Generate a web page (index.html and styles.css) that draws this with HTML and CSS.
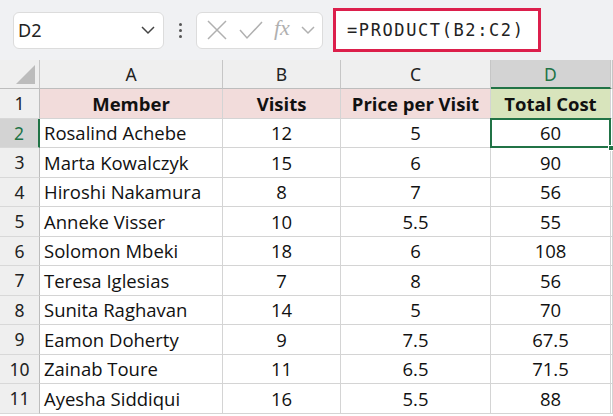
FILE: index.html
```html
<!DOCTYPE html>
<html lang="en">
<head>
  <meta charset="UTF-8">
  <meta name="viewport" content="width=device-width, initial-scale=1.0">
  <title>Total Cost</title>
  <link rel="stylesheet" href="styles.css">
</head>
<body>
  <div class="formula-bar">
    <div class="name-box">
      <span>D2</span>
      <svg class="chevron" width="16" height="10" viewBox="0 0 16 10"><path d="M2 2 L8 8 L14 2" fill="none" stroke="#444" stroke-width="1.5"/></svg>
    </div>
    <div class="grip"><i></i><i></i><i></i></div>
    <div class="fx-box">
      <svg width="22" height="22" viewBox="0 0 22 22"><path d="M2 2 L20 20 M20 2 L2 20" stroke="#b0b0b0" stroke-width="1.5" fill="none"/></svg>
      <svg width="24" height="22" viewBox="0 0 24 22"><path d="M1 11 L8 19 L23 3" stroke="#b0b0b0" stroke-width="1.5" fill="none"/></svg>
      <span class="fx">fx</span>
      <svg width="14" height="10" viewBox="0 0 14 10"><path d="M1 2 L7 8 L13 2" fill="none" stroke="#b0b0b0" stroke-width="1.5"/></svg>
    </div>
    <div class="formula">=PRODUCT(B2:C2)</div>
  </div>

  <div class="sheet">
    <div class="col-head corner"><span class="tri"></span></div>
    <div class="col-head">A</div>
    <div class="col-head">B</div>
    <div class="col-head">C</div>
    <div class="col-head active">D</div>
    <div class="col-head"></div>

    <div class="row-head">1</div>
    <div class="cell head pink">Member</div>
    <div class="cell head pink">Visits</div>
    <div class="cell head pink">Price per Visit</div>
    <div class="cell head green">Total Cost</div>
    <div class="cell"></div>

    <div class="row-head active">2</div>
    <div class="cell name">Rosalind Achebe</div>
    <div class="cell">12</div>
    <div class="cell">5</div>
    <div class="cell selected">60<span class="handle"></span></div>
    <div class="cell"></div>

    <div class="row-head">3</div>
    <div class="cell name">Marta Kowalczyk</div>
    <div class="cell">15</div>
    <div class="cell">6</div>
    <div class="cell">90</div>
    <div class="cell"></div>

    <div class="row-head">4</div>
    <div class="cell name">Hiroshi Nakamura</div>
    <div class="cell">8</div>
    <div class="cell">7</div>
    <div class="cell">56</div>
    <div class="cell"></div>

    <div class="row-head">5</div>
    <div class="cell name">Anneke Visser</div>
    <div class="cell">10</div>
    <div class="cell">5.5</div>
    <div class="cell">55</div>
    <div class="cell"></div>

    <div class="row-head">6</div>
    <div class="cell name">Solomon Mbeki</div>
    <div class="cell">18</div>
    <div class="cell">6</div>
    <div class="cell">108</div>
    <div class="cell"></div>

    <div class="row-head">7</div>
    <div class="cell name">Teresa Iglesias</div>
    <div class="cell">7</div>
    <div class="cell">8</div>
    <div class="cell">56</div>
    <div class="cell"></div>

    <div class="row-head">8</div>
    <div class="cell name">Sunita Raghavan</div>
    <div class="cell">14</div>
    <div class="cell">5</div>
    <div class="cell">70</div>
    <div class="cell"></div>

    <div class="row-head">9</div>
    <div class="cell name">Eamon Doherty</div>
    <div class="cell">9</div>
    <div class="cell">7.5</div>
    <div class="cell">67.5</div>
    <div class="cell"></div>

    <div class="row-head">10</div>
    <div class="cell name">Zainab Toure</div>
    <div class="cell">11</div>
    <div class="cell">6.5</div>
    <div class="cell">71.5</div>
    <div class="cell"></div>

    <div class="row-head">11</div>
    <div class="cell name">Ayesha Siddiqui</div>
    <div class="cell">16</div>
    <div class="cell">5.5</div>
    <div class="cell">88</div>
    <div class="cell"></div>
  </div>
</body>
</html>
```

FILE: styles.css
```css
* {
  margin: 0;
  padding: 0;
  box-sizing: border-box;
}

body {
  font-family: "Open Sans", "Noto Sans", sans-serif;
  background: #fff;
  width: 613px;
  height: 416px;
  overflow: hidden;
}

/* Barra de fórmulas */
.formula-bar {
  height: 60px;
  background: #f0f1f3;
  display: flex;
  align-items: center;
  padding: 0 0 0 13px;
}

.name-box {
  width: 151px;
  height: 37px;
  background: #fff;
  border: 1px solid #dcdcdc;
  border-radius: 6px;
  display: flex;
  align-items: center;
  justify-content: space-between;
  padding: 0 7px 0 4px;
  font-family: "Noto Sans", sans-serif;
  font-size: 18px;
  color: #222;
}

.grip {
  width: 32px;
  display: flex;
  flex-direction: column;
  align-items: center;
  gap: 3px;
}

.grip i {
  width: 3px;
  height: 3px;
  background: #555;
  border-radius: 50%;
}

.fx-box {
  width: 127px;
  height: 37px;
  background: #fff;
  border: 1px solid #dcdcdc;
  border-radius: 6px;
  display: flex;
  align-items: center;
  gap: 11px;
  padding-left: 9px;
}

.fx {
  font-family: "Liberation Serif", serif;
  font-style: italic;
  font-size: 22px;
  color: #b0b0b0;
  margin-top: -4px;
}

.formula {
  margin-left: 10px;
  width: 208px;
  height: 44px;
  background: #fff;
  border: 3px solid #dc1f4c;
  display: flex;
  align-items: center;
  padding-left: 11px;
  font-family: "DejaVu Sans Mono", monospace;
  font-size: 17px;
  letter-spacing: 1.6px;
  color: #222;
}

/* Hoja */
.sheet {
  display: grid;
  grid-template-columns: 40px 183px 118px 150px 120px 1fr;
  grid-template-rows: 29px repeat(11, 29.5px);
}

.col-head,
.row-head {
  background: #efefef;
  font-family: "Noto Sans", sans-serif;
  font-size: 17.5px;
  color: #222;
  display: flex;
  align-items: center;
  justify-content: center;
}

.col-head {
  border-right: 1px solid #c6c6c6;
  border-bottom: 1px solid #bdbdbd;
}

.row-head {
  border-right: 1px solid #bdbdbd;
  border-bottom: 1px solid #d8d8d8;
}

.col-head.active {
  background: #d3d3d3;
  color: #217346;
  border-bottom: 2px solid #217346;
}

.row-head.active {
  background: #d3d3d3;
  color: #217346;
  border-right: 2px solid #217346;
}

.corner {
  align-items: flex-end;
  justify-content: flex-end;
  padding: 0 4px 4px 0;
}

.tri {
  width: 0;
  height: 0;
  border-left: 19px solid transparent;
  border-bottom: 19px solid #bcbcbc;
}

.cell {
  border-right: 1px solid #d4d4d4;
  border-bottom: 1px solid #d4d4d4;
  font-size: 18.5px;
  color: #111;
  display: flex;
  align-items: center;
  justify-content: center;
  position: relative;
}

.cell.name {
  justify-content: flex-start;
  padding-left: 4px;
}

.cell.head {
  font-weight: 700;
}

.pink {
  background: #f2dcdb;
}

.green {
  background: #d8e4bc;
}

.selected::after {
  content: '';
  position: absolute;
  top: -1px;
  left: -1px;
  right: -1px;
  bottom: -1px;
  border: 2px solid #217346;
}

.handle {
  position: absolute;
  right: -4px;
  bottom: -4px;
  width: 6px;
  height: 6px;
  background: #217346;
  border: 1px solid #fff;
  z-index: 2;
}
```
